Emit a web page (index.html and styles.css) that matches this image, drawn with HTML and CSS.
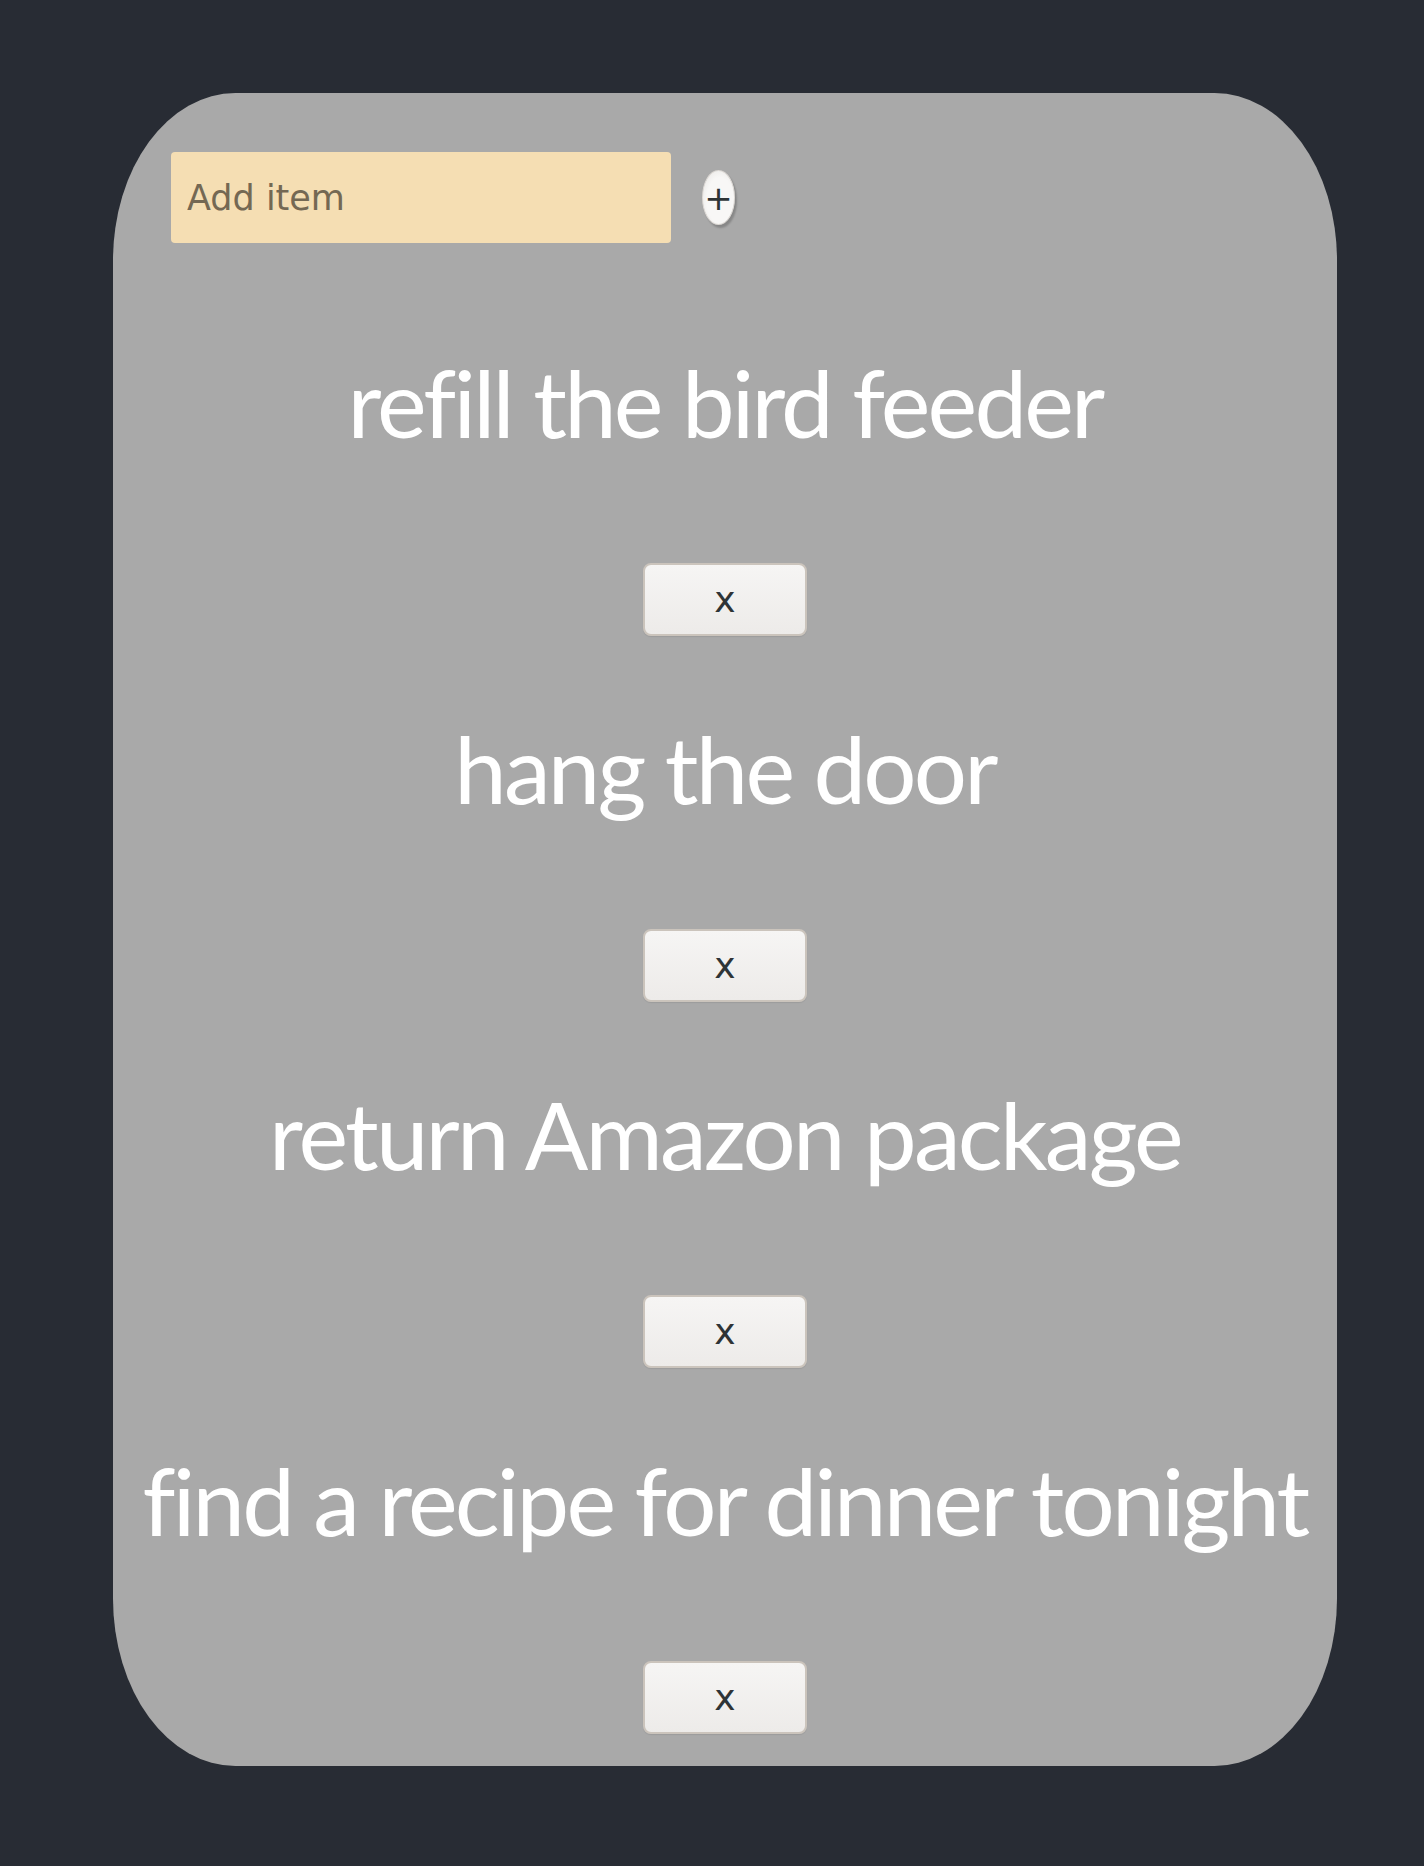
FILE: index.html
```html
<!DOCTYPE html>
<html lang="en">
<head>
<meta charset="utf-8">
<title>Todo</title>
<link rel="stylesheet" href="styles.css">
</head>
<body>
  <main class="card">
    <form class="add-row">
      <input class="add-input" type="text" placeholder="Add item">
      <button class="add-btn" type="button">+</button>
    </form>
    <ul class="list">
      <li class="item">
        <p class="item-text">refill the bird feeder</p>
        <button class="del-btn" type="button">x</button>
      </li>
      <li class="item">
        <p class="item-text">hang the door</p>
        <button class="del-btn" type="button">x</button>
      </li>
      <li class="item">
        <p class="item-text">return Amazon package</p>
        <button class="del-btn" type="button">x</button>
      </li>
      <li class="item">
        <p class="item-text">find a recipe for dinner tonight</p>
        <button class="del-btn" type="button">x</button>
      </li>
    </ul>
  </main>
</body>
</html>
```

FILE: styles.css
```css
html, body {
  background: #282c34;
}
body {
  margin: 8px;
  font-family: "DejaVu Sans", sans-serif;
}
.card {
  box-sizing: border-box;
  width: 1224px;
  margin: 85px 0 0 105px;
  padding: 59px 58px 32px;
  background: #a9a9a9;
  border-radius: 10%;
}
.add-row {
  display: flex;
  align-items: center;
  gap: 31px;
  margin: 0;
}
.add-input {
  box-sizing: border-box;
  width: 500px;
  height: 91px;
  padding: 0 16px;
  border: none;
  border-radius: 4px;
  background: #f5deb3;
  font-family: "DejaVu Sans", sans-serif;
  font-size: 35px;
  color: #333;
  outline: none;
}
.add-input::placeholder {
  color: #746853;
  opacity: 1;
}
.add-btn {
  box-sizing: border-box;
  width: 33px;
  height: 55px;
  padding: 0;
  border: 1px solid #dcd8d4;
  border-radius: 50%;
  background: radial-gradient(ellipse at 55% 55%, #f8f7f6 55%, #e4e2df 100%);
  box-shadow: 2px 3px 2px rgba(0,0,0,0.2);
  font-family: "DejaVu Sans", sans-serif;
  font-size: 34px;
  line-height: 1;
  color: #2e3436;
}
.list {
  list-style: none;
  margin: 0;
  padding: 27px 0 0;
  display: flex;
  flex-direction: column;
  align-items: center;
}
.item {
  display: flex;
  flex-direction: column;
  align-items: center;
}
.item-text {
  margin: 84px 0 113px;
  font-family: "Lato", sans-serif;
  font-size: 94px;
  line-height: 96px;
  letter-spacing: -2.8px;
  font-variant-ligatures: none;
  color: #ffffff;
  white-space: nowrap;
}
.del-btn {
  box-sizing: border-box;
  width: 164px;
  height: 73px;
  padding: 0;
  border: 2px solid #cbc4bc;
  border-radius: 8px;
  background: linear-gradient(#f6f5f4, #edebe9);
  box-shadow: 0 1px 1px rgba(0,0,0,0.08);
  font-family: "DejaVu Sans", sans-serif;
  font-size: 36px;
  color: #2e3436;
}
```
